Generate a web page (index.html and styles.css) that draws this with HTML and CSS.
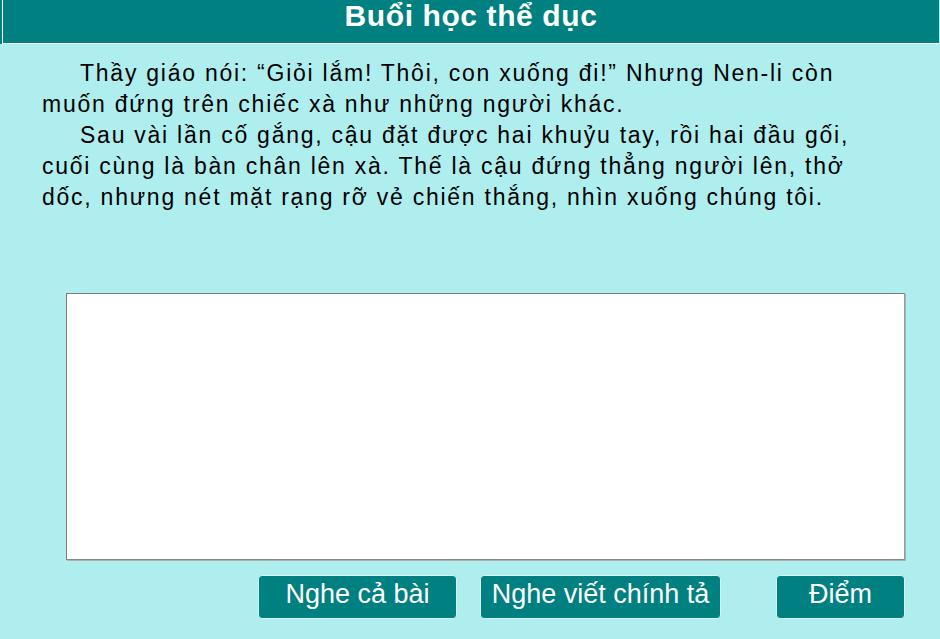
FILE: index.html
```html
<!DOCTYPE html>
<html lang="vi">
<head>
  <meta charset="UTF-8" />
  <meta name="viewport" content="width=device-width, initial-scale=1" />
  <title>Buổi học thể dục</title>
  <link rel="stylesheet" href="styles.css">
</head>
<body>
  <div class="title-bar">
    <h1>Buổi học thể dục</h1>
  </div>

  <div class="passage">
    <p>Thầy giáo nói: “Giỏi lắm! Thôi, con xuống đi!” Nhưng Nen-li còn muốn đứng trên chiếc xà như những người khác.</p>
    <p>Sau vài lần cố gắng, cậu đặt được hai khuỷu tay, rồi hai đầu gối, cuối cùng là bàn chân lên xà. Thế là cậu đứng thẳng người lên, thở dốc, nhưng nét mặt rạng rỡ vẻ chiến thắng, nhìn xuống chúng tôi.</p>
  </div>

  <textarea class="dictation" id="dictation"></textarea>

  <div class="actions">
    <button class="btn btn-listen">Nghe cả bài</button>
    <button class="btn btn-dictate">Nghe viết chính tả</button>
    <button class="btn btn-score">Điểm</button>
  </div>
</body>
</html>
```

FILE: styles.css
```css
body {
  margin: 0;
  background: #afeeee;
  font-family: "Liberation Sans", Arial, sans-serif;
  overflow: hidden;
}
.title-bar {
  height: 43px;
  margin: 0 1px 0 2px;
  background: #008080;
  border-left: 1px solid #fff;
  border-bottom: 1px solid #fff;
  box-shadow: -2px 0 0 #008080;
  text-align: center;
}
h1 {
  margin: 0;
  color: #fff;
  font-size: 30px;
  font-weight: bold;
  letter-spacing: 0.6px;
  line-height: 32px;
}
.passage {
  width: 835px;
  margin: 14px 0 0 42px;
  font-size: 23px;
  letter-spacing: 1.75px;
  line-height: 31px;
  color: #000;
}
.passage p {
  margin: 0;
  text-indent: 38px;
}
.dictation {
  display: block;
  box-sizing: border-box;
  width: 839px;
  height: 267px;
  margin: 80px 0 0 66px;
  padding: 6px;
  background: #fff;
  border: 1px solid #7c7c7c;
  border-right-color: #9a9a9a;
  border-bottom-color: #8a8a8a;
  box-shadow: 1px 1px 0 #b0b0b0;
  resize: none;
  outline: none;
  font-family: "Liberation Sans", Arial, sans-serif;
  font-size: 22px;
}
.actions {
  display: flex;
  justify-content: flex-end;
  margin: 15px 35px 0 0;
}
.btn {
  height: 44px;
  padding: 0 0 6px;
  background: #008080;
  color: #fff;
  border: 1px solid #d8f4f4;
  border-radius: 4px;
  font-family: "Liberation Sans", Arial, sans-serif;
  font-size: 27px;
  cursor: pointer;
}
.btn:hover {
  background: #006c6c;
}
.btn-listen {
  width: 199px;
}
.btn-dictate {
  width: 241px;
  margin-left: 23px;
}
.btn-score {
  width: 129px;
  margin-left: 55px;
}
```
